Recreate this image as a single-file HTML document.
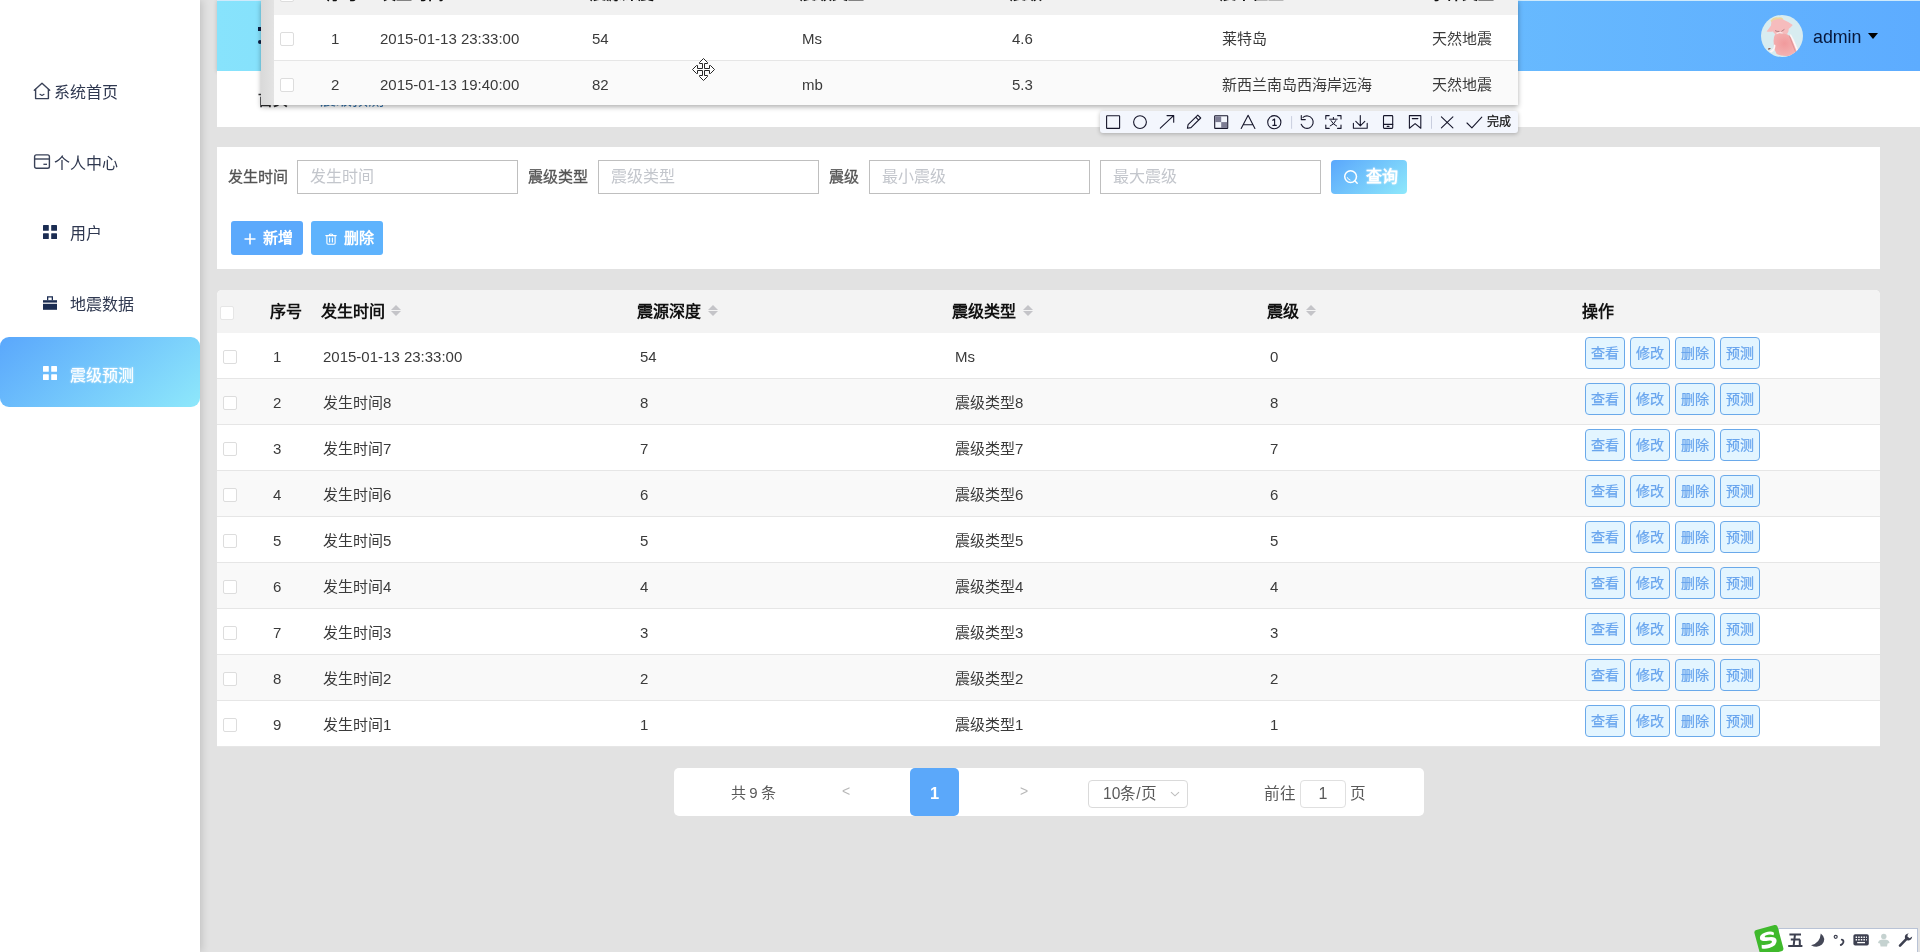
<!DOCTYPE html>
<html lang="zh-CN"><head><meta charset="utf-8"><title>震级预测</title>
<style>
*{box-sizing:border-box;margin:0;padding:0}
html,body{width:1920px;height:952px;overflow:hidden}
body{position:relative;background:#e2e2e2;font-family:"Liberation Sans",sans-serif;font-size:15px;color:#333;}
.abs{position:absolute}
.t{position:absolute;white-space:nowrap;line-height:20px;height:20px}
svg{position:absolute;overflow:visible}
#root{position:absolute;left:0;top:0;width:1920px;height:952px;overflow:hidden;will-change:transform;transform:translateZ(0)}
#side{position:absolute;left:0;top:0;width:200px;height:952px;background:#fff;box-shadow:2px 0 8px rgba(0,0,0,.15)}
#side .t{font-size:16px;color:#2f3850}
#side .act{position:absolute;left:0;top:337px;width:200px;height:70px;border-radius:9px;background:linear-gradient(140deg,#5aa7fc 0%,#8ee8fb 100%)}
#hdr{position:absolute;left:217px;top:0;width:1703px;height:71px;background:linear-gradient(90deg,#87e3fc 0%,#5dacff 100%);box-shadow:0 1px 4px rgba(0,0,0,.18);border-top:1px solid #cfeafb}
#crumb{position:absolute;left:217px;top:71px;width:1703px;height:56px;background:#fff}
#search{position:absolute;left:217px;top:147px;width:1663px;height:122px;background:#fff}
.lbl{font-size:15px;color:#555;-webkit-text-stroke:0.3px #555}
.inp{position:absolute;top:160px;height:34px;width:221px;border:1px solid #bfbfbf;background:#fff}
.inp span{position:absolute;left:12px;top:6px;line-height:20px;font-size:16px;color:#c3c6cc;white-space:nowrap}
.btn{position:absolute;height:34px;border-radius:4px;color:#fff;font-weight:bold;font-size:15px}
#tbl{position:absolute;left:217px;top:290px;width:1663px;height:457px;background:#fff;border-radius:5px 5px 0 0;overflow:hidden}
#tbl .hd{position:absolute;left:0;top:0;width:1663px;height:43px;background:#f3f3f3}
#tbl .hd .t{font-size:16px;font-weight:bold;color:#111;top:12px}
.row{position:absolute;left:0;width:1663px;height:46px;border-bottom:1px solid #e6e6e6;background:#fff}
.row.s{background:#f9f9f9}
.row .t{top:14px;font-size:15px;color:#3a3a3a}
.cb{position:absolute;width:14px;height:14px;border:1px solid #dddddd;border-radius:2px;background:#fff}
.ab{position:absolute;top:4px;width:40px;height:32px;border:1px solid #6aa9ea;border-radius:4px;background:#e3f5ff;color:#6aa6ee;font-size:14px;line-height:30px;text-align:center;white-space:nowrap;-webkit-text-stroke:0.25px #6aa6ee}
.sort{position:absolute;width:0;height:0;border-left:5px solid transparent;border-right:5px solid transparent}
.sort.u{border-bottom:5px solid #c4c4c8}
.sort.d{border-top:5px solid #c4c4c8}
#pager{position:absolute;left:674px;top:768px;width:750px;height:48px;background:#fff;border-radius:5px}
#pager .t{font-size:15px;color:#5a5a5a}
#ov{position:absolute;left:261px;top:0;width:1257px;height:105px;background:#fff;box-shadow:0 2px 5px rgba(0,0,0,.32);overflow:hidden}
#ov .strip{position:absolute;left:0;top:0;width:13px;height:105px;background:linear-gradient(90deg,#d9d9d9,#e3e3e3)}
#ov .hd{position:absolute;left:13px;top:0;width:1244px;height:15px;background:#f1f1f1;overflow:hidden}
#ov .hd .t{font-size:16px;font-weight:bold;color:#111;top:-16px}
#ov .r{position:absolute;left:13px;width:1244px;height:46px;background:#fff;border-bottom:1px solid #e6e6e6}
#ov .r.s{background:#fafafa}
#ov .r .t{top:14px;font-size:15px;color:#3a3a3a}
#tb{position:absolute;left:1100px;top:111px;width:418px;height:22px;background:#f3f6fd;border-radius:3px;box-shadow:0 1px 4px rgba(0,0,0,.25)}
#ime{position:absolute;left:1778px;top:928px;width:140px;height:24px;background:#fff;border:1px solid #b9c3d6;border-bottom:none}
</style></head>
<body>
<div id="root">
<div id="side">
<svg style="left:33px;top:82px" width="18" height="18" viewBox="0 0 18 18" fill="none" stroke="#3a4258" stroke-width="1.4" stroke-linejoin="round" stroke-linecap="round"><path d="M1.3 8.3 L9 1.2 L16.7 8.3"/><path d="M2.6 7.4 V16.6 H15.4 V7.4"/><path d="M7 12.3 L9 13.5 L11 12.3" stroke-width="1.2"/></svg>
<div class="t" style="left:54px;top:83px">系统首页</div>
<svg style="left:33px;top:153px" width="18" height="18" viewBox="0 0 18 18" fill="none" stroke="#3a4258" stroke-width="1.4"><rect x="1.6" y="1.9" width="14.8" height="13.3" rx="1.8"/><path d="M1.6 6 H16.4"/><path d="M10.4 11.3 H14" stroke-width="1.3"/></svg>
<div class="t" style="left:54px;top:154px">个人中心</div>
<svg style="left:43px;top:225px" width="14" height="14" viewBox="0 0 14 14" fill="#1b2c52"><rect x="0.0" y="0.0" width="5.8" height="5.8" rx="0.6"/><rect x="8.2" y="0.0" width="5.8" height="5.8" rx="0.6"/><rect x="0.0" y="8.2" width="5.8" height="5.8" rx="0.6"/><rect x="8.2" y="8.2" width="5.8" height="5.8" rx="0.6"/></svg>
<div class="t" style="left:70px;top:224px">用户</div>
<svg style="left:43px;top:296px" width="14" height="14" viewBox="0 0 14 14" fill="#1b2c52"><path d="M4 0.3 H10 V4.2 H8.7 V1.6 H5.3 V4.2 H4 Z"/><rect x="0" y="4.2" width="14" height="2.4"/><rect x="0" y="7.8" width="14" height="6"/></svg>
<div class="t" style="left:70px;top:295px">地震数据</div>
<div class="act"></div>
<svg style="left:43px;top:366px" width="14" height="14" viewBox="0 0 14 14" fill="#ffffff"><rect x="0.0" y="0.0" width="5.8" height="5.8" rx="0.6"/><rect x="8.2" y="0.0" width="5.8" height="5.8" rx="0.6"/><rect x="0.0" y="8.2" width="5.8" height="5.8" rx="0.6"/><rect x="8.2" y="8.2" width="5.8" height="5.8" rx="0.6"/></svg>
<div class="t" style="left:70px;top:366px;color:#fff;text-shadow:0 0 2px rgba(255,255,255,.95)">震级预测</div>
</div>
<div id="hdr">
<div class="abs" style="left:41px;top:26px;width:4px;height:4px;background:#0b1c40"></div><div class="abs" style="left:41px;top:39px;width:4px;height:4px;background:#0b1c40;border-radius:2px"></div>
<svg style="left:1544px;top:14px" width="42" height="42" viewBox="0 0 42 42"><defs><clipPath id="av"><circle cx="21" cy="21" r="21"/></clipPath><filter id="avb" x="-10%" y="-10%" width="120%" height="120%"><feGaussianBlur stdDeviation="0.55"/></filter><radialGradient id="avg" cx="0.45" cy="0.45" r="0.6"><stop offset="0" stop-color="#f19a9c"/><stop offset="1" stop-color="#f4b4b4"/></radialGradient></defs><g clip-path="url(#av)"><rect width="42" height="42" fill="#d8ecf0"/><g filter="url(#avb)"><path d="M9.5 5.5 Q13 1.5 17 2.6 Q21 1.6 22.6 4.4 L20 6.4 Q14 5 10.4 7.4Z" fill="#ecd7a0"/><path d="M11 6 Q17 2.6 23 5 Q28 7 31.8 10 Q29.6 12.6 27.6 14 Q28 17 26 19 Q20 17.6 14.4 19.4 Q12.4 17.6 12 16.4 Q8.6 17 5.6 16.5 Q8.6 12.6 10 10.4 Q10 7.6 11 6Z" fill="#f6bcbd"/><path d="M14 19.6 Q20 16.8 26.6 19.4 Q31 22 33.4 27 Q36.4 32 37 36.4 Q33 40.4 27 41 Q20 41.4 15.6 39 Q12.6 34 12.8 29 Q12 23 14 19.6Z" fill="url(#avg)"/><path d="M28.6 19.6 Q31.6 26 35.8 36.6 L37.4 35.4 Q33 24 30 19.4Z" fill="#fff6f6"/><path d="M28.2 20.4 Q30.6 27 34.6 37" stroke="#c98083" stroke-width="0.5" fill="none"/><path d="M13 29.6 Q13.4 34 8.4 36.6 L10.4 37.6 Q14.8 35 14.4 30Z" fill="#fff6f6"/><path d="M7 33.6 Q8.6 32.6 10 33.6 Q8.8 34.8 7.2 34.6Z" fill="#8a5548"/><path d="M14 15.6 Q16 16.8 18.4 16.4 M20.4 16.4 Q22 15.4 23.4 14.4" stroke="#9a6468" stroke-width="0.7" fill="none"/><path d="M15.6 18.6 Q18 16.8 21.6 18" stroke="#fff" stroke-width="0.8" fill="none"/></g></g></svg>
<div class="t" style="left:1596px;top:26px;font-size:17.8px;color:#07173b">admin</div>
<div class="abs" style="left:1651px;top:32px;width:0;height:0;border-left:5px solid transparent;border-right:5px solid transparent;border-top:6px solid #000"></div>
</div>
<div id="crumb"><div class="t" style="left:41px;top:19px;font-size:15px;font-weight:bold;color:#303133">首页</div><div class="t" style="left:103px;top:19px;font-size:16px;color:#2d6ea8">震级预测</div></div>
<div id="search"></div>
<div class="t lbl" style="left:228px;top:167px">发生时间</div>
<div class="inp" style="left:297px"><span>发生时间</span></div>
<div class="t lbl" style="left:528px;top:167px">震级类型</div>
<div class="inp" style="left:598px"><span>震级类型</span></div>
<div class="t lbl" style="left:829px;top:167px">震级</div>
<div class="inp" style="left:869px"><span>最小震级</span></div>
<div class="inp" style="left:1100px"><span>最大震级</span></div>
<div class="btn" style="left:1331px;top:160px;width:76px;background:linear-gradient(140deg,#5aa7fc 0%,#8ee8fb 100%)"><svg style="left:12px;top:9px" width="16" height="16" viewBox="0 0 16 16" fill="none" stroke="#fff" stroke-width="1.5" stroke-linecap="round"><circle cx="7.6" cy="7.6" r="5.9"/><path d="M11.8 11.8 L14.2 14.2"/><path d="M4.3 8.6 A3.6 3.6 0 0 0 7 11" stroke-width="1"/></svg><div class="t" style="left:35px;top:7px;font-size:16px;text-shadow:0 0 2px rgba(255,255,255,.7)">查询</div></div>
<div class="btn" style="left:231px;top:221px;width:72px;background:#5ba9fc;border-radius:3px"><svg style="left:13px;top:12px" width="12" height="12" viewBox="0 0 12 12" stroke="#fff" stroke-width="1.6" fill="none"><path d="M6 0.5 V11.5 M0.5 6 H11.5"/></svg><div class="t" style="left:32px;top:7px">新增</div></div>
<div class="btn" style="left:311px;top:221px;width:72px;background:#5eb3fd;border-radius:3px"><svg style="left:14px;top:12px" width="12" height="12" viewBox="0 0 12 12" stroke="#fff" stroke-width="1.1" fill="none" stroke-linecap="round"><path d="M0.8 2.6 H11.2"/><path d="M4 2.4 Q4 1 6 1 Q8 1 8 2.4"/><path d="M1.9 2.8 V10 Q1.9 11.2 3.1 11.2 H8.9 Q10.1 11.2 10.1 10 V2.8"/><path d="M4.6 5 V9 M7.4 5 V9"/></svg><div class="t" style="left:33px;top:7px">删除</div></div>
<div id="tbl">
<div class="hd"><div class="cb" style="left:3px;top:16px;border-color:#e6e6e6"></div><div class="t" style="left:53px">序号</div><div class="t" style="left:104px">发生时间</div><div class="sort u" style="left:174px;top:15px"></div><div class="sort d" style="left:174px;top:21px"></div><div class="t" style="left:420px">震源深度</div><div class="sort u" style="left:491px;top:15px"></div><div class="sort d" style="left:491px;top:21px"></div><div class="t" style="left:735px">震级类型</div><div class="sort u" style="left:806px;top:15px"></div><div class="sort d" style="left:806px;top:21px"></div><div class="t" style="left:1050px">震级</div><div class="sort u" style="left:1089px;top:15px"></div><div class="sort d" style="left:1089px;top:21px"></div><div class="t" style="left:1365px">操作</div></div>
<div class="row" style="top:43px"><div class="cb" style="left:6px;top:17px"></div><div class="t" style="left:56px">1</div><div class="t" style="left:106px">2015-01-13 23:33:00</div><div class="t" style="left:423px">54</div><div class="t" style="left:738px">Ms</div><div class="t" style="left:1053px">0</div><div class="ab" style="left:1368px">查看</div><div class="ab" style="left:1413px">修改</div><div class="ab" style="left:1458px">删除</div><div class="ab" style="left:1503px">预测</div></div>
<div class="row s" style="top:89px"><div class="cb" style="left:6px;top:17px"></div><div class="t" style="left:56px">2</div><div class="t" style="left:106px">发生时间8</div><div class="t" style="left:423px">8</div><div class="t" style="left:738px">震级类型8</div><div class="t" style="left:1053px">8</div><div class="ab" style="left:1368px">查看</div><div class="ab" style="left:1413px">修改</div><div class="ab" style="left:1458px">删除</div><div class="ab" style="left:1503px">预测</div></div>
<div class="row" style="top:135px"><div class="cb" style="left:6px;top:17px"></div><div class="t" style="left:56px">3</div><div class="t" style="left:106px">发生时间7</div><div class="t" style="left:423px">7</div><div class="t" style="left:738px">震级类型7</div><div class="t" style="left:1053px">7</div><div class="ab" style="left:1368px">查看</div><div class="ab" style="left:1413px">修改</div><div class="ab" style="left:1458px">删除</div><div class="ab" style="left:1503px">预测</div></div>
<div class="row s" style="top:181px"><div class="cb" style="left:6px;top:17px"></div><div class="t" style="left:56px">4</div><div class="t" style="left:106px">发生时间6</div><div class="t" style="left:423px">6</div><div class="t" style="left:738px">震级类型6</div><div class="t" style="left:1053px">6</div><div class="ab" style="left:1368px">查看</div><div class="ab" style="left:1413px">修改</div><div class="ab" style="left:1458px">删除</div><div class="ab" style="left:1503px">预测</div></div>
<div class="row" style="top:227px"><div class="cb" style="left:6px;top:17px"></div><div class="t" style="left:56px">5</div><div class="t" style="left:106px">发生时间5</div><div class="t" style="left:423px">5</div><div class="t" style="left:738px">震级类型5</div><div class="t" style="left:1053px">5</div><div class="ab" style="left:1368px">查看</div><div class="ab" style="left:1413px">修改</div><div class="ab" style="left:1458px">删除</div><div class="ab" style="left:1503px">预测</div></div>
<div class="row s" style="top:273px"><div class="cb" style="left:6px;top:17px"></div><div class="t" style="left:56px">6</div><div class="t" style="left:106px">发生时间4</div><div class="t" style="left:423px">4</div><div class="t" style="left:738px">震级类型4</div><div class="t" style="left:1053px">4</div><div class="ab" style="left:1368px">查看</div><div class="ab" style="left:1413px">修改</div><div class="ab" style="left:1458px">删除</div><div class="ab" style="left:1503px">预测</div></div>
<div class="row" style="top:319px"><div class="cb" style="left:6px;top:17px"></div><div class="t" style="left:56px">7</div><div class="t" style="left:106px">发生时间3</div><div class="t" style="left:423px">3</div><div class="t" style="left:738px">震级类型3</div><div class="t" style="left:1053px">3</div><div class="ab" style="left:1368px">查看</div><div class="ab" style="left:1413px">修改</div><div class="ab" style="left:1458px">删除</div><div class="ab" style="left:1503px">预测</div></div>
<div class="row s" style="top:365px"><div class="cb" style="left:6px;top:17px"></div><div class="t" style="left:56px">8</div><div class="t" style="left:106px">发生时间2</div><div class="t" style="left:423px">2</div><div class="t" style="left:738px">震级类型2</div><div class="t" style="left:1053px">2</div><div class="ab" style="left:1368px">查看</div><div class="ab" style="left:1413px">修改</div><div class="ab" style="left:1458px">删除</div><div class="ab" style="left:1503px">预测</div></div>
<div class="row" style="top:411px"><div class="cb" style="left:6px;top:17px"></div><div class="t" style="left:56px">9</div><div class="t" style="left:106px">发生时间1</div><div class="t" style="left:423px">1</div><div class="t" style="left:738px">震级类型1</div><div class="t" style="left:1053px">1</div><div class="ab" style="left:1368px">查看</div><div class="ab" style="left:1413px">修改</div><div class="ab" style="left:1458px">删除</div><div class="ab" style="left:1503px">预测</div></div>
</div>
<div id="pager">
<div class="t" style="left:57px;top:15px;word-spacing:-0.8px">共 9 条</div><div class="t" style="left:168px;top:13px;color:#b8b8b8;font-size:14px">&lt;</div><div class="abs" style="left:236px;top:0;width:49px;height:48px;border-radius:5px;background:#5ba8fa"></div><div class="t" style="left:236px;width:49px;text-align:center;top:15px;color:#fff;font-weight:bold;font-size:16.5px">1</div><div class="t" style="left:346px;top:13px;color:#b8b8b8;font-size:14px">&gt;</div><div class="abs" style="left:414px;top:12px;width:100px;height:28px;border:1px solid #dadada;border-radius:4px"></div><div class="t" style="left:429px;top:16px;font-size:15.6px">10条/页</div><svg style="left:496px;top:23px" width="10" height="6" viewBox="0 0 10 6" fill="none" stroke="#bdbdbd" stroke-width="1.1"><path d="M1 1.2 L5 4.8 L9 1.2"/></svg><div class="t" style="left:590px;top:16px;font-size:15.6px">前往</div><div class="abs" style="left:626px;top:12px;width:46px;height:28px;border:1px solid #e0e0e0;border-radius:4px"></div><div class="t" style="left:626px;width:46px;text-align:center;top:16px;font-size:16px">1</div><div class="t" style="left:676px;top:16px;font-size:15.6px">页</div></div>
<div id="ov">
<div class="strip"></div>
<div class="hd"><div class="cb" style="left:6px;top:-12px"></div><div class="t" style="left:53px">序号</div><div class="t" style="left:106px">发生时间</div><div class="t" style="left:316px">震源深度</div><div class="t" style="left:526px">震级类型</div><div class="t" style="left:736px">震级</div><div class="t" style="left:946px">震中位置</div><div class="t" style="left:1156px">事件类型</div></div>
<div class="r" style="top:15px"><div class="cb" style="left:6px;top:17px"></div><div class="t" style="left:57px">1</div><div class="t" style="left:106px">2015-01-13 23:33:00</div><div class="t" style="left:318px">54</div><div class="t" style="left:528px">Ms</div><div class="t" style="left:738px">4.6</div><div class="t" style="left:948px">莱特岛</div><div class="t" style="left:1158px">天然地震</div></div>
<div class="r s" style="top:61px"><div class="cb" style="left:6px;top:17px"></div><div class="t" style="left:57px">2</div><div class="t" style="left:106px">2015-01-13 19:40:00</div><div class="t" style="left:318px">82</div><div class="t" style="left:528px">mb</div><div class="t" style="left:738px">5.3</div><div class="t" style="left:948px">新西兰南岛西海岸远海</div><div class="t" style="left:1158px">天然地震</div></div>
</div>
<div id="tb"><svg style="left:0;top:0" width="418" height="22" viewBox="0 0 418 22" fill="none" stroke="#16162b" stroke-width="1.1" stroke-linecap="round" stroke-linejoin="round"><rect x="6.6" y="4.8" width="13" height="12.6" rx="0.5"/><circle cx="40" cy="11.1" r="6.4"/><path d="M60.3 17.2 L73.6 4.7 M67 4.6 H73.7 V11.2"/><path d="M87.4 17.3 L88.1 13.7 L97.8 4.1 L100.7 7 L91 16.6 Z M95.7 6.1 L98.7 9.1" stroke-width="1.1"/><rect x="114.7" y="4.8" width="13" height="12.6" rx="0.5"/><rect x="115.2" y="5.3" width="6" height="5.8" fill="#7d7d94" stroke="none"/><rect x="121.2" y="11.1" width="6" height="5.8" fill="#7d7d94" stroke="none"/><path d="M141.2 17.5 L148.1 4.3 L154.9 17.5 M143.6 13.7 H152.6"/><circle cx="174.3" cy="11.2" r="6.6"/><path d="M172.7 9.2 L174.6 8 V14.3 M172.9 14.4 H176.3" stroke-width="1.1"/><path d="M191.6 5.5 V17.4" stroke="#c9cede" stroke-width="1"/><path d="M203 6.4 A6.2 6.2 0 1 1 201.2 13.3 M201.3 4.6 V8.6 H205.3"/><path d="M225.8 8 V4.6 H229.2 M237.6 4.6 H241 V8 M241 14 V17.4 H237.6 M229.2 17.4 H225.8 V14" /><path d="M229.6 8.2 H237.2 M233.4 6.4 V8.2 M231 9.6 Q233 13.6 236.6 15 M235.8 9.6 Q234 13.6 230.2 15" stroke-width="1"/><path d="M260.3 4.6 V14.6 M255.8 10.4 L260.3 14.8 L264.8 10.4 M253.4 12.2 V17.3 H267.2 V12.2"/><rect x="283.5" y="4.6" width="9.2" height="12.8" rx="0.8"/><path d="M283.5 13.4 H292.7 M287.2 15.4 H289"/><path d="M309.4 4.6 H320.8 V17.2 L315.1 12.6 L309.4 17.2 Z M312.3 7.6 H317.9"/><path d="M331.5 5.5 V17.4" stroke="#c9cede" stroke-width="1"/><path d="M341.4 5.8 L352.9 16.8 M352.9 5.8 L341.4 16.8"/><path d="M367 12 L371.9 16.8 L381.8 6.1"/></svg><div class="t" style="left:387px;top:1px;font-size:12px;color:#111;-webkit-text-stroke:0.25px #111">完成</div></div>
<svg style="left:692px;top:58px" width="23" height="23" viewBox="0 0 23 23" fill="#fff" stroke="#262626" stroke-width="1" stroke-linejoin="miter"><path d="M11.5 0.5 L15.5 4.5 V5.5 H12.5 V10.5 H17.5 V7.5 H18.5 L22.5 11.5 L18.5 15.5 H17.5 V12.5 H12.5 V17.5 H15.5 V18.5 L11.5 22.5 L7.5 18.5 V17.5 H10.5 V12.5 H5.5 V15.5 H4.5 L0.5 11.5 L4.5 7.5 H5.5 V10.5 H10.5 V5.5 H7.5 V4.5 Z"/></svg>
<div id="ime"><svg style="left:-25px;top:-4px" width="165" height="28" viewBox="0 0 165 28"><g transform="rotate(-15 15 14)"><rect x="2.5" y="2" width="24" height="27" rx="2.6" fill="#3fb92c"/><path d="M21.5 9.2 Q19 6.2 13 6.8 Q6.2 7.6 6.4 11.6 Q6.6 14.6 13.4 15.4 Q17.4 15.9 17.2 17.4 Q16.8 19 12 19 Q8.6 19 6.4 17.6 L5.6 21.2 Q8.6 22.9 13 22.7 Q21.6 22.4 22 17 Q22.2 13.2 15.4 12.2 Q11.2 11.6 11.4 10.6 Q11.8 9.4 15.2 9.6 Q18.4 9.9 20.4 11.6 Z" fill="#fff"/></g><g transform="translate(-0.6,-1)"><path d="M36 10.4 H47.6 M37.4 15.4 H46.6 M34.8 22 H49 M41.6 10.4 L40.2 22 M46.4 15.4 V22" stroke="#3d4050" stroke-width="2" fill="none"/><path d="M67.4 9.6 Q73.6 14.6 68.6 20.6 Q64 24.6 57.6 21.2 Q66.6 19.6 67.4 9.6 Z" fill="#454857"/><circle cx="82.3" cy="12.8" r="1.5" fill="none" stroke="#3d4050" stroke-width="1.2"/><path d="M88.4 15.6 Q90.6 16 89.8 18.6 Q89 20.4 87.4 21" stroke="#3d4050" stroke-width="1.9" fill="none" stroke-linecap="round"/><rect x="100" y="10.2" width="15.4" height="11.4" rx="1.8" fill="#3d4050"/><path d="M102.2 13.2 H113.4 M102.2 15.8 H113.4" stroke="#fff" stroke-width="1.4" stroke-dasharray="1.5 1.1"/><path d="M103.8 18.6 H111.6" stroke="#fff" stroke-width="1.3"/><circle cx="130.4" cy="12.4" r="2.7" fill="#c5d2d0"/><path d="M124.6 19 Q125 15.6 130.4 15.6 Q135.8 15.6 136.2 19 L134.2 19.4 L133.6 22.6 H127.2 L126.6 19.4 Z" fill="#c5d2d0"/><path d="M146.6 21.6 L153.6 14.4" stroke="#3d4050" stroke-width="2.6" stroke-linecap="round" fill="none"/><path d="M155.6 9.4 Q151.6 9.4 151.4 13 Q151.6 16.6 155.4 16.4 Q158.4 16.2 158.8 12.6 L156.2 14.2 L154 12.6 L154.4 10.2 Z" fill="#3d4050"/></g></svg></div>
</div>
</body></html>
